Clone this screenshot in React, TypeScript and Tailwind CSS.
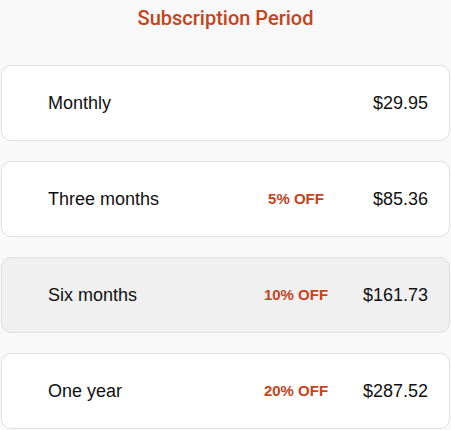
import React, { useState } from 'react';

interface Plan {
  id: string;
  label: string;
  discount?: string;
  price: string;
}

const PLANS: Plan[] = [
  { id: 'monthly', label: 'Monthly', price: '$29.95' },
  { id: 'three', label: 'Three months', discount: '5% OFF', price: '$85.36' },
  { id: 'six', label: 'Six months', discount: '10% OFF', price: '$161.73' },
  { id: 'year', label: 'One year', discount: '20% OFF', price: '$287.52' },
];

export default function App() {
  const [selected, setSelected] = useState('six');

  return (
    <div className="min-h-screen bg-[#f9f9f9] pl-px pr-px" style={{ fontFamily: '"Liberation Sans", Arial, sans-serif' }}>
      <h2
        className="pt-[4px] text-center text-[20px] leading-[28px] font-medium text-[#c5441b]"
        style={{ fontFamily: 'Roboto, "Open Sans", sans-serif' }}
      >
        Subscription Period
      </h2>

      <div className="mt-[33px] flex flex-col gap-[20px]">
        {PLANS.map(p => (
          <button
            key={p.id}
            onClick={() => setSelected(p.id)}
            className={`flex h-[76px] w-[449px] items-center rounded-[10px] border border-[#e0e0e0] pl-[46px] pr-[21px] text-left ${
              selected === p.id ? 'bg-[#f0f0f0]' : 'bg-white'
            }`}
          >
            <span className="flex-1 text-[18px] text-[#111]">{p.label}</span>
            {p.discount && (
              <span className="w-[80px] text-center text-[15px] font-bold text-[#c5441b]">{p.discount}</span>
            )}
            <span className="ml-[12px] w-[80px] text-right text-[18px] text-[#111]">{p.price}</span>
          </button>
        ))}
      </div>
    </div>
  );
}
